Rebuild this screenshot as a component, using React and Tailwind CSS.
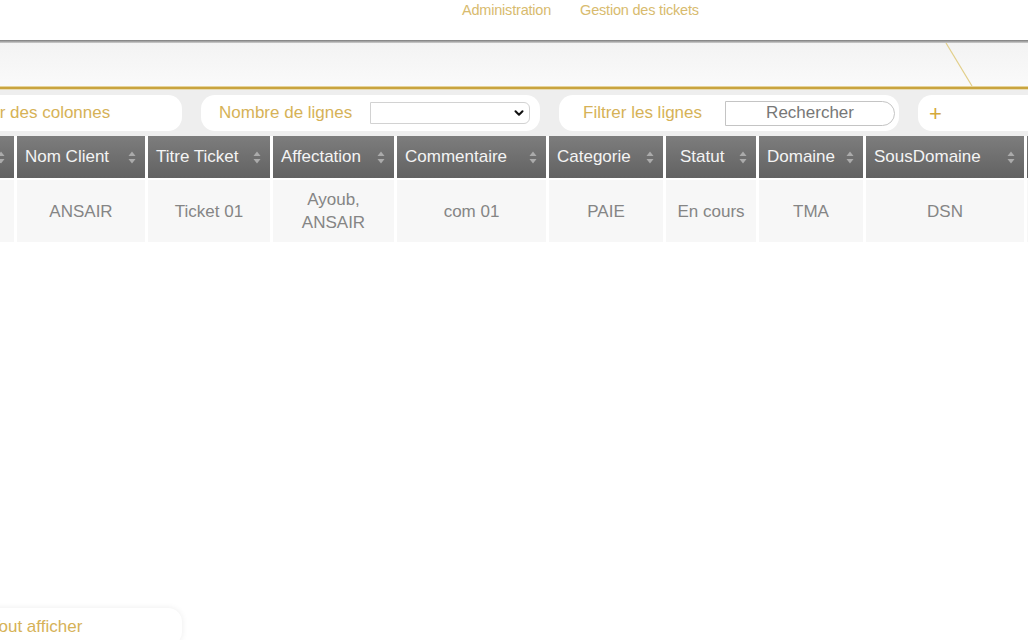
import { ChevronDown } from 'lucide-react';

const cols = [
  { label: 'Id', w: 'w-[80px]', pl: 'pl-[8px]', value: '' },
  { label: 'Nom Client', w: 'w-[128px]', pl: 'pl-[8px]', value: 'ANSAIR' },
  { label: 'Titre Ticket', w: 'w-[122px]', pl: 'pl-[8px]', value: 'Ticket 01' },
  { label: 'Affectation', w: 'w-[121px]', pl: 'pl-[8px]', value: 'Ayoub, ANSAIR' },
  { label: 'Commentaire', w: 'w-[149px]', pl: 'pl-[8px]', value: 'com 01' },
  { label: 'Categorie', w: 'w-[114px]', pl: 'pl-[8px]', value: 'PAIE' },
  { label: 'Statut', w: 'w-[90px]', pl: 'pl-[14px]', value: 'En cours' },
  { label: 'Domaine', w: 'w-[104px]', pl: 'pl-[8px]', value: 'TMA' },
  { label: 'SousDomaine', w: 'w-[158px]', pl: 'pl-[8px]', value: 'DSN' },
  { label: 'Priorité', w: 'w-[110px]', pl: 'pl-[8px]', value: 'Haute' },
];

function SortIcon() {
  return (
    <svg width="8" height="13" viewBox="0 0 8 13" className="shrink-0">
      <path d="M4 0.5 L7.5 5 L0.5 5 Z" fill="#ababab" />
      <path d="M4 12.5 L7.5 8 L0.5 8 Z" fill="#ababab" />
    </svg>
  );
}

export default function App() {
  return (
    <div className="w-full h-[640px] overflow-hidden bg-white font-['Liberation_Sans',Arial,sans-serif]">
      {/* top nav */}
      <div className="h-[40px] bg-white flex items-start pl-[462px] gap-[29px] text-[14.5px] text-[#d8bb6e] tracking-[-0.2px]">
        <span>Administration</span>
        <span>Gestion des tickets</span>
      </div>
      <div className="h-[3px] bg-gradient-to-b from-[#7b7b7b] to-[#cfcfcf]" />
      <div className="relative h-[43px] bg-gradient-to-b from-[#f3f3f3] to-[#fafafa]">
        <svg className="absolute left-[944px] top-0" width="32" height="43" viewBox="0 0 32 43">
          <line x1="2" y1="0" x2="28" y2="43" stroke="#e2cf8a" strokeWidth="1.2" />
        </svg>
      </div>
      <div className="h-[1px] bg-[#e6d49a]" />
      <div className="h-[2px] bg-[#c9a43f]" />
      <div className="h-[1px] bg-[#e8dcb4]" />

      {/* toolbar */}
      <div className="bg-[#eeeeee] pt-[5px] pb-[5px] flex items-center gap-[19px] text-[17px] whitespace-nowrap">
        <div className="-ml-[98px] w-[280px] h-[36px] rounded-[14px] bg-white flex items-center pl-[46px] text-[#d6b257] shrink-0">
          Afficher des colonnes
        </div>
        <div className="w-[339px] h-[36px] rounded-[14px] bg-white flex items-center pl-[18px] shrink-0">
          <span className="text-[#d6b257] shrink-0">Nombre de lignes</span>
          <div className="ml-[18px] shrink-0 w-[160px] h-[22px] border border-[#d2d2d2] rounded-r-md bg-white flex items-center justify-end pr-[3px]">
            <ChevronDown size={14} strokeWidth={3.5} color="#111" />
          </div>
        </div>
        <div className="w-[340px] h-[36px] rounded-[14px] bg-white flex items-center pl-[24px] shrink-0">
          <span className="text-[#d6b257] shrink-0">Filtrer les lignes</span>
          <div className="ml-[23px] shrink-0 w-[170px] h-[25px] border border-[#c4c4c4] rounded-l-[2px] rounded-r-full flex items-center justify-center text-[#777777]">
            Rechercher
          </div>
        </div>
        <div className="w-[140px] h-[36px] rounded-[14px] bg-white flex items-center pl-[11px] text-[22px] text-[#d4a93a] shrink-0">
          +
        </div>
      </div>

      {/* table */}
      <div className="-ml-[66px] flex flex-col gap-[2px] w-max">
        <div className="flex gap-[3px]">
          {cols.map((c) => (
            <div
              key={c.label}
              className={`${c.w} ${c.pl} h-[42px] bg-gradient-to-b from-[#7d7d7d] to-[#626262] flex items-center justify-between pr-[9px] text-[17px] text-[#f4f4f4]`}
            >
              <span className="whitespace-nowrap">{c.label}</span>
              <SortIcon />
            </div>
          ))}
        </div>
        <div className="flex gap-[3px]">
          {cols.map((c) => (
            <div
              key={c.label}
              className={`${c.w} h-[62px] bg-[#f7f7f7] flex items-center justify-center text-center px-[8px] text-[17px] leading-[23px] text-[#858585]`}
            >
              {c.value}
            </div>
          ))}
        </div>
      </div>

      {/* bottom */}
      <div className="mt-[366px] -ml-[40px] w-[222px] h-[38px] rounded-[14px] bg-white shadow-[0_0_6px_rgba(0,0,0,0.08)] flex items-center pl-[30px] text-[17px] text-[#d6b257]">
        Tout afficher
      </div>
    </div>
  );
}
